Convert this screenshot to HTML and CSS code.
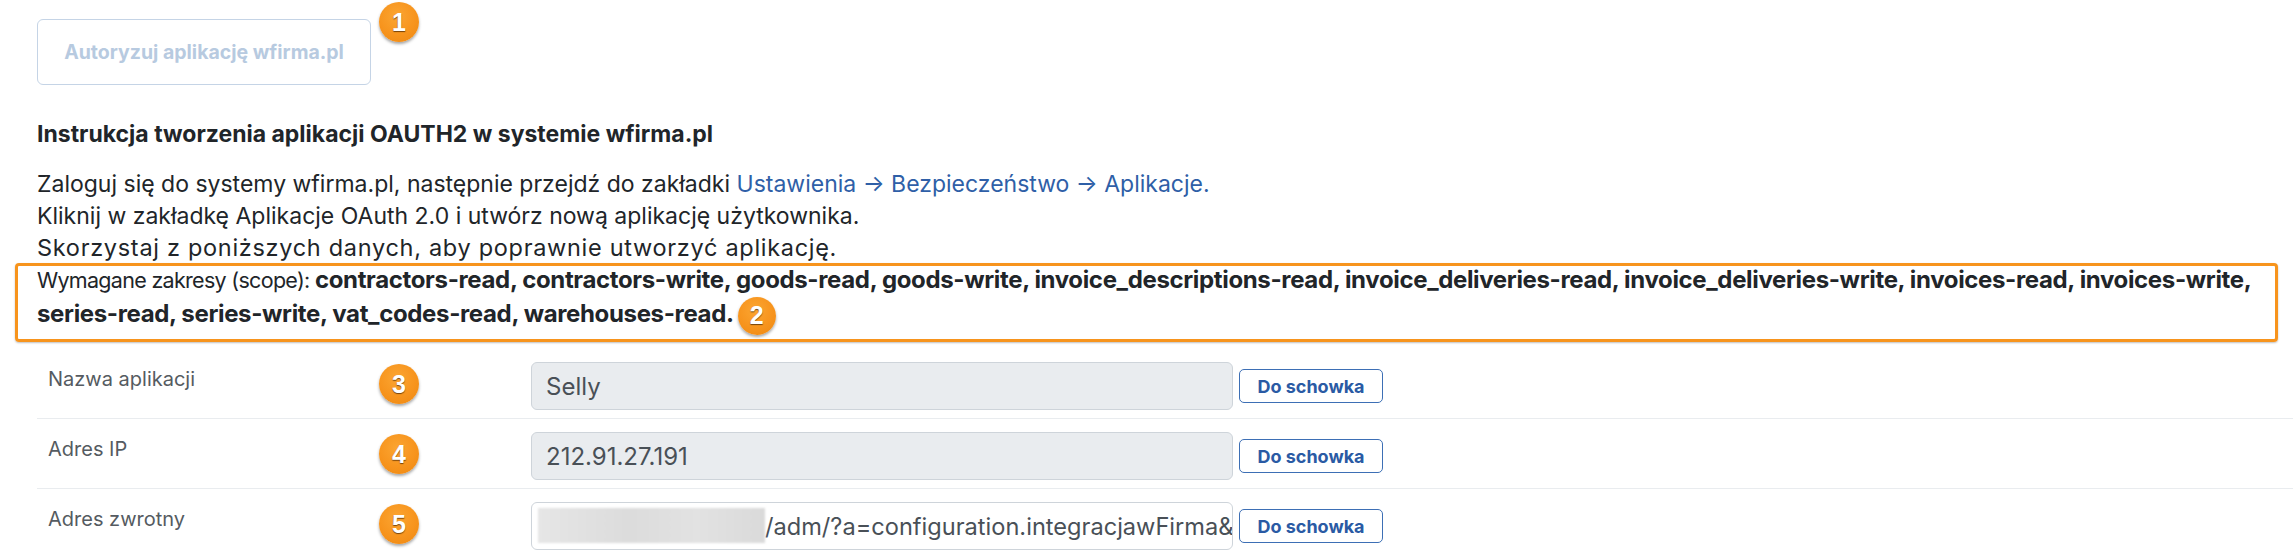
FILE: index.html
```html
<!DOCTYPE html>
<html lang="pl">
<head>
<meta charset="utf-8">
<title>wfirma.pl OAUTH2</title>
<link rel="stylesheet" href="styles.css">
</head>
<body>
<div class="page">
  <div class="auth">
    <button class="auth-btn" disabled>Autoryzuj aplikację wfirma.pl</button>
    <span class="badge badge-1">1</span>
  </div>

  <h2 class="title">Instrukcja tworzenia aplikacji OAUTH2 w systemie wfirma.pl</h2>
  <p class="line">Zaloguj się do systemy wfirma.pl, następnie przejdź do zakładki <a class="link" href="#">Ustawienia → Bezpieczeństwo → Aplikacje.</a></p>
  <p class="line line-2">Kliknij w zakładkę Aplikacje OAuth 2.0 i utwórz nową aplikację użytkownika.</p>
  <p class="line line-3">Skorzystaj z poniższych danych, aby poprawnie utworzyć aplikację.</p>
  <p class="scope"><span class="scope-label">Wymagane zakresy (scope): </span><b>contractors-read, contractors-write, goods-read, goods-write, invoice_descriptions-read, invoice_deliveries-read, invoice_deliveries-write, invoices-read, invoices-write,<br>series-read, series-write, vat_codes-read, warehouses-read.</b><span class="badge badge-inline">2</span></p>

  <div class="rows">
    <div class="row">
      <div class="label">Nazwa aplikacji</div>
      <input class="field disabled" type="text" value="Selly" readonly>
      <button class="copy">Do schowka</button>
      <span class="badge badge-row">3</span>
    </div>
    <div class="row">
      <div class="label">Adres IP</div>
      <input class="field disabled" type="text" value="212.91.27.191" readonly>
      <button class="copy">Do schowka</button>
      <span class="badge badge-row">4</span>
    </div>
    <div class="row">
      <div class="label">Adres zwrotny</div>
      <div class="field-wrap">
        <input class="field field-url" type="text" value="/adm/?a=configuration.integracjawFirma&amp;action=callback" readonly>
        <span class="blur"></span>
      </div>
      <button class="copy">Do schowka</button>
      <span class="badge badge-row">5</span>
    </div>
  </div>
</div>
</body>
</html>
```

FILE: styles.css
```css
* { box-sizing: border-box; }

html, body {
  margin: 0;
  padding: 0;
  background: #ffffff;
  overflow: hidden;
}

body {
  font-family: Inter, "Noto Sans", "DejaVu Sans", sans-serif;
  color: #212529;
}

.page {
  padding: 19px 15px 0 37px;
}

.auth {
  position: relative;
  height: 66px;
}

.auth-btn {
  width: 334px;
  height: 66px;
  border: 1px solid #c5d4e6;
  border-radius: 6px;
  background: #ffffff;
  color: #b7cae0;
  font-family: Inter, sans-serif;
  font-weight: 700;
  font-size: 19.5px;
  padding: 0;
}

.badge {
  display: inline-flex;
  align-items: center;
  justify-content: center;
  width: 40px;
  height: 40px;
  border-radius: 50%;
  background: radial-gradient(circle at 45% 35%, #fba532 0%, #f7941d 55%, #ec8712 100%);
  box-shadow: 0 2px 3px rgba(0, 0, 0, 0.35);
  color: #ffffff;
  font-family: "Liberation Sans", Arial, sans-serif;
  font-weight: 700;
  font-size: 25px;
  line-height: 1;
  letter-spacing: 0;
  text-shadow: 0 1px 1px rgba(60, 30, 0, 0.7);
}

.badge-1 {
  position: absolute;
  left: 342px;
  top: -17px;
}

.title {
  margin: 33px 0 18px;
  font-size: 23px;
  font-weight: 700;
  line-height: 32px;
}

.line {
  margin: 0;
  font-size: 23px;
  line-height: 32px;
}

.line-2 { letter-spacing: 0; }
.line-3 { font-size: 23.5px; letter-spacing: 0.7px; }

.link {
  color: #2f5fa7;
  text-decoration: none;
}

.scope {
  position: relative;
  margin: 0;
  line-height: 32px;
  white-space: nowrap;
}

.scope-label {
  font-size: 21.5px;
  letter-spacing: -0.7px;
}

.scope b {
  font-size: 24px;
  font-weight: 700;
  letter-spacing: -0.35px;
}

.scope::after {
  content: "";
  position: absolute;
  left: -22px;
  right: 0;
  top: -1px;
  bottom: -10px;
  border: 3px solid #f7941d;
  border-radius: 4px;
  box-shadow: 0 1px 2px rgba(0, 0, 0, 0.25);
  pointer-events: none;
}

.badge-inline {
  margin-left: 4px;
  vertical-align: middle;
  width: 38px;
  height: 38px;
  position: relative;
  top: -2px;
  margin-top: -10px;
  margin-bottom: -10px;
}

.rows {
  margin-top: 17px;
}

.row {
  position: relative;
  display: grid;
  grid-template-columns: 477px 702px 144px;
  column-gap: 6px;
  align-items: center;
  padding: 13px 0 8px 11px;
  border-bottom: 1px solid #e9ecef;
  margin-right: -15px;
}

.label {
  align-self: start;
  line-height: 34px;
  font-size: 20px;
  color: #555b61;
}

.field {
  display: block;
  width: 100%;
  height: 48px;
  margin: 0;
  padding: 0 14px;
  border: 1px solid #ced4da;
  border-radius: 6px;
  background: #ffffff;
  font-family: Inter, sans-serif;
  font-size: 24px;
  color: #495057;
  outline: none;
}

.field.disabled {
  background: #e9ecef;
}

.field-wrap {
  position: relative;
}

.field-url {
  padding-left: 233px;
  padding-right: 0;
  font-size: 23.6px;
}

.blur {
  position: absolute;
  left: 7px;
  top: 6px;
  width: 227px;
  height: 35px;
  background: linear-gradient(90deg, #e6e6e6, #dcdcdc 40%, #e2e2e2 70%, #dadada);
  filter: blur(1px);
  pointer-events: none;
}

.copy {
  width: 144px;
  height: 34px;
  padding: 0;
  border: 1px solid #3d6fb5;
  border-radius: 5px;
  background: #ffffff;
  color: #2a5aa4;
  font-family: Inter, sans-serif;
  font-weight: 700;
  font-size: 18px;
}

.badge-row {
  position: absolute;
  left: 342px;
  top: 15px;
}
```
